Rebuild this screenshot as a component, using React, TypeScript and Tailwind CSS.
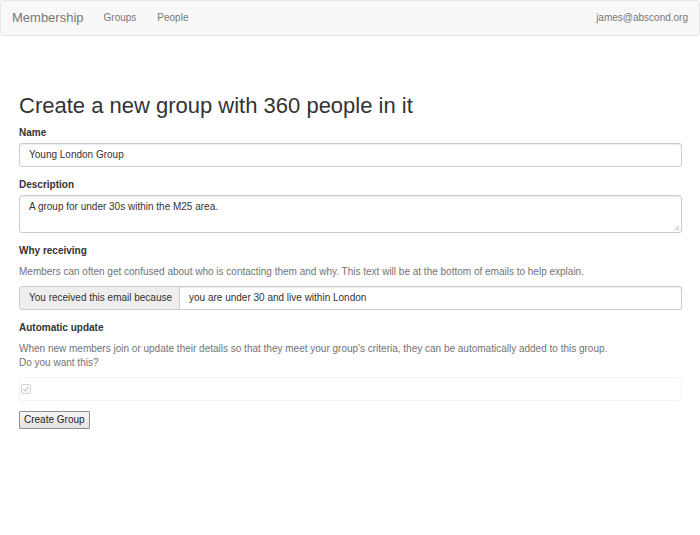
import React from "react";

const App: React.FC = () => {
  return (
    <div className="min-h-[535px] bg-white text-[#333] text-[10px] leading-[14px] font-['Liberation_Sans',Arial,sans-serif]">
      {/* Navbar */}
      <nav className="h-[36px] flex items-center justify-between bg-[#f8f8f8] border border-[#e7e7e7] rounded-[3px] px-[11px] text-[#777]">
        <div className="flex items-center">
          <span className="text-[13px] mr-[20px]">Membership</span>
          <span className="mr-[21px]">Groups</span>
          <span>People</span>
        </div>
        <span>james@abscond.org</span>
      </nav>

      {/* Form */}
      <div className="pl-[19px] pr-[18px]">
        <h2 className="text-[22px] leading-[24px] font-medium mt-[58px] mb-[8px]">
          Create a new group with 360 people in it
        </h2>

        <label className="block font-bold mb-[3px]">Name</label>
        <div className="h-[24px] border border-[#ccc] rounded-[3px] flex items-center px-[9px] shadow-[inset_0_1px_1px_rgba(0,0,0,0.075)]">
          Young London Group
        </div>

        <label className="block font-bold mt-[11px] mb-[3px]">Description</label>
        <div className="relative h-[38px] border border-[#ccc] rounded-[3px] px-[9px] pt-[4px] shadow-[inset_0_1px_1px_rgba(0,0,0,0.075)]">
          A group for under 30s within the M25 area.
          <svg className="absolute right-[1px] bottom-[1px]" width="6" height="6" viewBox="0 0 6 6">
            <path d="M5 1L1 5M5 3.5L3.5 5" stroke="#999" strokeWidth="0.8" />
          </svg>
        </div>

        <label className="block font-bold mt-[11px] mb-[7px]">Why receiving</label>
        <p className="text-[#737373] mb-[7px]">
          Members can often get confused about who is contacting them and why. This text will be at the bottom of emails to help explain.
        </p>
        <div className="flex h-[24px]">
          <span className="w-[161px] shrink-0 whitespace-nowrap flex items-center px-[9px] bg-[#eee] border border-[#ccc] rounded-l-[3px]">
            You received this email because
          </span>
          <span className="flex-1 flex items-center px-[9px] border border-l-0 border-[#ccc] rounded-r-[3px] shadow-[inset_0_1px_1px_rgba(0,0,0,0.075)]">
            you are under 30 and live within London
          </span>
        </div>

        <label className="block font-bold mt-[11px] mb-[7px]">Automatic update</label>
        <p className="text-[#737373]">
          When new members join or update their details so that they meet your group's criteria, they can be automatically added to this group.
          <br />
          Do you want this?
        </p>
        <div className="mt-[7px] h-[24px] border border-[#f3f3f3] rounded-[3px] flex items-center px-[1px]">
          <span className="w-[10px] h-[10px] border border-[#d4d4d4] rounded-[2px] bg-[#fafafa] flex items-center justify-center">
            <svg width="8" height="8" viewBox="0 0 8 8">
              <path d="M1.5 4.3L3.2 6L6.5 1.8" fill="none" stroke="#aaa" strokeWidth="0.9" />
            </svg>
          </span>
        </div>

        <button className="mt-[10px] h-[18px] px-[4px] border border-[#8f8f8f] bg-gradient-to-b from-[#f6f6f6] to-[#e3e3e3] text-[10px] text-[#222] rounded-[1px]">
          Create Group
        </button>
      </div>
    </div>
  );
};

export default App;
